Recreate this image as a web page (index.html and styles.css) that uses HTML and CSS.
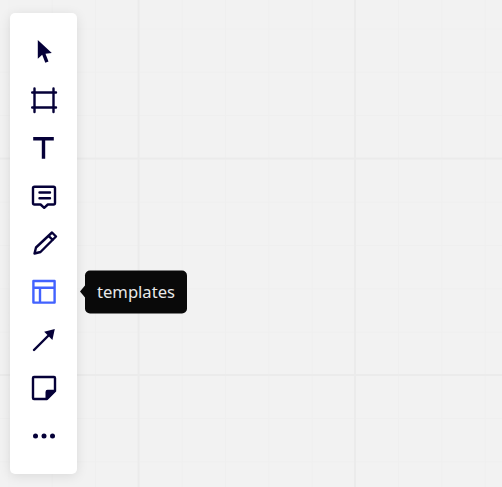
FILE: index.html
```html
<!DOCTYPE html>
<html lang="en">
<head>
    <meta charset="UTF-8">
    <meta name="viewport" content="width=device-width, initial-scale=1.0">
    <title>Board</title>
    <link rel="stylesheet" href="styles.css">
</head>
<body>
    <div class="canvas">
        <nav class="toolbar">
            <button class="tool" aria-label="select">
                <svg viewBox="0 0 28 28"><path class="fill" d="M7.800 2 L7.800 20.800 L12.200 16.800 L15.300 24.800 L18.500 23.500 L15.500 15.800 L21.800 15 Z"/></svg>
            </button>
            <button class="tool" aria-label="frame">
                <svg viewBox="0 0 28 28"><path class="line" d="M2.200 6.500 H26 M2.200 21.500 H26 M4.500 2.500 V26 M23.500 2.500 V26"/></svg>
            </button>
            <button class="tool" aria-label="text">
                <svg viewBox="0 0 28 28"><path class="line wide" d="M3.200 4.700 H23.800 M13.500 4.700 V24.800"/></svg>
            </button>
            <button class="tool" aria-label="comment">
                <svg viewBox="0 0 28 28"><path class="line" d="M4.500 4.800 H23.500 Q25 4.800 25 6.300 V21 Q25 22.500 23.500 22.500 H17.800 L14.200 25.800 L10.600 22.500 H4.500 Q3 22.500 3 21 V6.300 Q3 4.800 4.500 4.800 Z M9.500 10.500 H20 M9.500 16.300 H20"/></svg>
            </button>
            <button class="tool" aria-label="pencil">
                <svg viewBox="0 0 28 28"><path class="line" d="M4.500 23.500 L6 17.500 L22 2.500 L26 6.500 L10.500 22 Z M18.500 5.800 L22.800 10"/></svg>
            </button>
            <button class="tool tool-active" aria-label="templates">
                <svg viewBox="0 0 28 28"><path class="line" d="M3.400 3 H24.600 V24.600 H3.400 Z M3.400 9.800 H24.600 M10 9.800 V24.600"/></svg>
                <span class="tooltip">templates</span>
            </button>
            <button class="tool" aria-label="arrow">
                <svg viewBox="0 0 28 28"><path class="line" d="M4 24 L18 10"/><path class="fill" d="M24.800 3 L22.400 14 L14.200 5.800 Z"/></svg>
            </button>
            <button class="tool" aria-label="sticky note">
                <svg viewBox="0 0 28 28"><path class="line" d="M4 3 H24 Q25 3 25 4 V17 L17 25 H4 Q3 25 3 24 V4 Q3 3 4 3 Z"/><path class="fill" d="M25.500 15.800 V17 L17 25.500 H15.500 V18 Q15.500 15.800 17.500 15.800 Z"/></svg>
            </button>
            <button class="tool" aria-label="more">
                <svg viewBox="0 0 28 28"><circle class="fill" cx="5.500" cy="14" r="2.500"/><circle class="fill" cx="14" cy="14" r="2.500"/><circle class="fill" cx="22.500" cy="14" r="2.500"/></svg>
            </button>
        </nav>
    </div>
</body>
</html>
```

FILE: styles.css
```css
:root {
    --ink: #050038;
    --blue: #4262ff;
}

* {
    box-sizing: border-box;
    margin: 0;
    padding: 0;
}

html, body {
    height: 100%;
    overflow: hidden;
}

body {
    background-color: #f2f2f2;
    font-family: "Noto Sans", "Open Sans", sans-serif;
}

/* major lines every 216.5px, minor every 43.3px */
.canvas {
    height: 100%;
    padding: 13px 0 0 10px;
    background-image:
        linear-gradient(to right, #ebebeb 2px, transparent 2px),
        linear-gradient(to bottom, #ebebeb 2px, transparent 2px),
        linear-gradient(to right, #efefef 1px, transparent 1px),
        linear-gradient(to bottom, #efefef 1px, transparent 1px);
    background-size: 216.5px 216.5px, 216.5px 216.5px, 43.3px 43.3px, 43.3px 43.3px;
    background-position: 137.500px 0, 0 157.500px, 8.500px 0, 0 28.500px;
}

.toolbar {
    display: flex;
    flex-direction: column;
    align-items: center;
    width: 67px;
    height: 461px;
    padding: 14.500px 0;
    background-color: #ffffff;
    border-radius: 5px;
    box-shadow: 0 2px 12px rgba(0, 0, 0, 0.1);
}

.tool {
    position: relative;
    display: flex;
    flex: 1;
    align-items: center;
    justify-content: center;
    width: 100%;
    background: none;
    border: none;
    color: var(--ink);
    font-family: inherit;
}

.tool svg {
    display: block;
    width: 28px;
    height: 28px;
}

.tool-active {
    color: var(--blue);
}

.fill {
    fill: currentColor;
}

.line {
    fill: none;
    stroke: currentColor;
    stroke-width: 2.400;
    stroke-linejoin: round;
    stroke-linecap: round;
}

.wide {
    stroke-width: 3.400;
    stroke-linecap: butt;
}

.tooltip {
    position: absolute;
    left: 75px;
    top: 50%;
    width: 102px;
    height: 43px;
    transform: translateY(-50%);
    background-color: #090909;
    border-radius: 5px;
    color: #e8e8e8;
    font-size: 16.600px;
    line-height: 41px;
    text-align: center;
    white-space: nowrap;
}

.tooltip::before {
    content: "";
    position: absolute;
    left: -5px;
    top: 50%;
    margin-top: -6px;
    border-top: 6px solid transparent;
    border-bottom: 6px solid transparent;
    border-right: 5px solid #090909;
}
```
